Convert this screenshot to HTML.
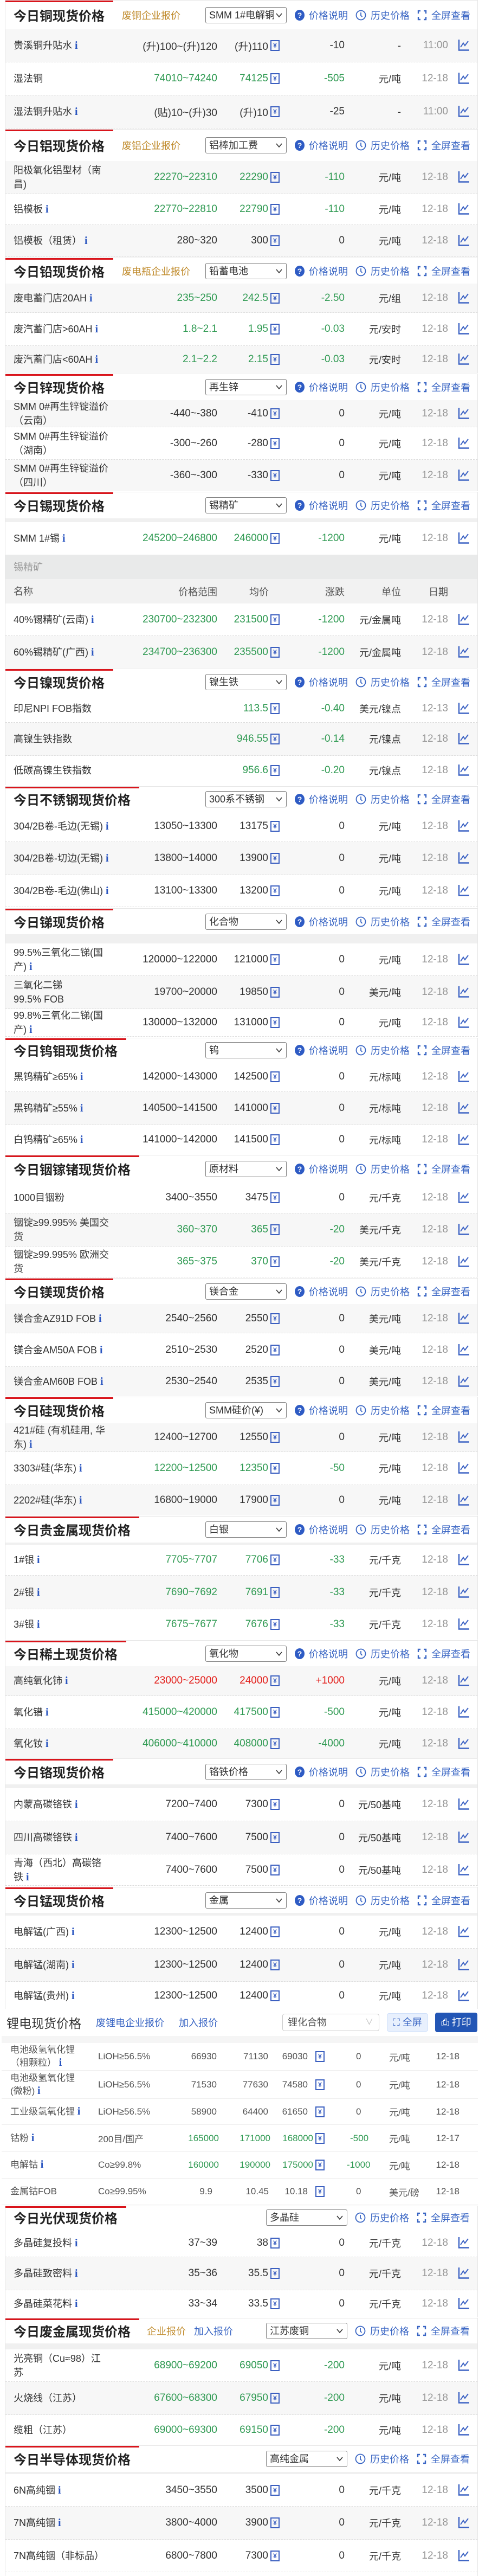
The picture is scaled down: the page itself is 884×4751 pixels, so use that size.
<!DOCTYPE html>
<html><head><meta charset="utf-8">
<style>
*{box-sizing:border-box;margin:0;padding:0}
body{width:884px;height:4751px;position:relative;background:#fff;font-family:"Liberation Sans","Noto Sans CJK SC",sans-serif;color:#333;overflow:hidden}
.s{position:absolute;left:9px;width:873px;border:1px solid #e6e6e6;border-bottom:none;background:#fff;overflow:hidden}
.bar{position:absolute;left:0;top:-1px;height:4px;background:#d9141b;z-index:3}
.h{position:absolute;left:0;right:0;top:0;background:#fff}
.h>*{position:absolute;top:50%;transform:translateY(-50%)}
.t{left:15px;font:bold 24px/30px "Noto Sans CJK SC",sans-serif;color:#222;white-space:nowrap}
.gl{font-size:18px;color:#c08b2c;white-space:nowrap}
.bl{font-size:18px;color:#3a66c4;white-space:nowrap}
.sel{left:369px;width:150px;height:30px;border:1px solid #808080;border-radius:3px;font-size:18px;line-height:28px;padding-left:6px;white-space:nowrap;overflow:hidden;color:#333;background:#fff}
.sel svg{position:absolute;right:7px;top:9px}
.lk{left:534px;display:flex;align-items:center;font-size:18px;color:#3a66c4;white-space:nowrap}
.q{display:inline-block;width:18px;height:20px;border-radius:50%;background:#2e5bc4;color:#fff;font:bold 14px/20px "Liberation Sans";text-align:center;font-style:normal;margin-right:8px}
.lk svg{margin:0 8px 0 14px}
.r{position:absolute;left:0;right:0;border-bottom:1px dashed #dcdcdc;background:#fff}
.g{background:#f7f7f7}
.r>span{position:absolute;top:0;bottom:0;display:flex;align-items:center;white-space:nowrap;font-size:19px;color:#333}
.r>span.n{left:15px;width:178px;font-size:18px;white-space:normal;line-height:26px}
.n p{margin:0}
.n i,.li i{font:bold 20px "Liberation Serif",serif;color:#2b56c0;font-style:normal}
.a{right:480px}
.v{right:365px}
.c{right:245px}
.u{right:141px;font-size:18px!important}
.d{right:54px;color:#999!important}
.k{position:absolute;left:835px;top:50%;margin-top:-12px;width:22px;height:22px}
.y{display:inline-block;width:17px;height:20px;border:2px solid #3b5fc0;color:#3b5fc0;font:bold 12px/16px "Liberation Sans";text-align:center;margin-left:4px}
.G{color:#2f9a52!important}
.R{color:#e3211d!important}
.band{position:absolute;left:0;right:0;background:#f0f0f0}
.li{position:absolute;left:0;right:0;border-bottom:1px solid #eee;background:#fff}
.li>span{position:absolute;top:0;bottom:0;display:flex;align-items:center;white-space:nowrap;font-size:17px;color:#555}
.li>span.n{left:16px;width:130px;white-space:normal;line-height:24px}
</style></head><body>
<svg width="0" height="0" style="position:absolute"><defs>
<symbol id="ch" viewBox="0 0 22 22"><path d="M2 1V20.5H21" fill="none" stroke="#3d63c4" stroke-width="2.4"/><path d="M5 15L10 7.5L13 12L19 4" fill="none" stroke="#3d63c4" stroke-width="2"/></symbol>
<symbol id="cv" viewBox="0 0 12 10"><path d="M1 2L6 8L11 2" fill="none" stroke="#333" stroke-width="1.6"/></symbol>
<symbol id="ck" viewBox="0 0 20 20"><circle cx="10" cy="10" r="8.5" fill="none" stroke="#3a66c4" stroke-width="1.8"/><path d="M10 5V10.5L12.5 13" fill="none" stroke="#3a66c4" stroke-width="1.8"/></symbol>
<symbol id="br" viewBox="0 0 18 20"><path d="M6 2H2V7M12 2H16V7M2 13V18H6M16 13V18H12" fill="none" stroke="#3a66c4" stroke-width="2.4"/></symbol>
</defs></svg>

<!-- 1 copper -->
<div class="s" style="top:0;height:237px"><div class="bar" style="width:199px"></div>
<div class="h" style="height:53px"><b class="t">今日铜现货价格</b><span class="gl" style="left:215px">废铜企业报价</span><div class="sel">SMM 1#电解铜<svg width="12" height="10"><use href="#cv"/></svg></div><div class="lk"><i class="q">?</i>价格说明<svg width="20" height="20"><use href="#ck"/></svg>历史价格<svg width="18" height="20"><use href="#br"/></svg>全屏查看</div></div>
<div class="r g" style="top:53px;height:61px"><span class="n"><p>贵溪铜升贴水 <i>i</i></p></span><span class="a">(升)100~(升)120</span><span class="v">(升)110<b class="y">¥</b></span><span class="c">-10</span><span class="u">-</span><span class="d">11:00</span><svg class="k"><use href="#ch"/></svg></div>
<div class="r" style="top:114px;height:61px"><span class="n"><p>湿法铜</p></span><span class="a G">74010~74240</span><span class="v G">74125<b class="y">¥</b></span><span class="c G">-505</span><span class="u">元/吨</span><span class="d">12-18</span><svg class="k"><use href="#ch"/></svg></div>
<div class="r g" style="top:175px;height:61px"><span class="n"><p>湿法铜升贴水 <i>i</i></p></span><span class="a">(贴)10~(升)30</span><span class="v">(升)10<b class="y">¥</b></span><span class="c">-25</span><span class="u">-</span><span class="d">11:00</span><svg class="k"><use href="#ch"/></svg></div>
</div>

<!-- 2 aluminium -->
<div class="s" style="top:238px;height:237px"><div class="bar" style="width:199px"></div>
<div class="h" style="height:58px"><b class="t">今日铝现货价格</b><span class="gl" style="left:215px">废铝企业报价</span><div class="sel">铝棒加工费<svg width="12" height="10"><use href="#cv"/></svg></div><div class="lk"><i class="q">?</i>价格说明<svg width="20" height="20"><use href="#ck"/></svg>历史价格<svg width="18" height="20"><use href="#br"/></svg>全屏查看</div></div>
<div class="r g" style="top:58px;height:61px"><span class="n"><p>阳极氧化铝型材（南昌)</p></span><span class="a G">22270~22310</span><span class="v G">22290<b class="y">¥</b></span><span class="c G">-110</span><span class="u">元/吨</span><span class="d">12-18</span><svg class="k"><use href="#ch"/></svg></div>
<div class="r" style="top:119px;height:57px"><span class="n"><p>铝模板 <i>i</i></p></span><span class="a G">22770~22810</span><span class="v G">22790<b class="y">¥</b></span><span class="c G">-110</span><span class="u">元/吨</span><span class="d">12-18</span><svg class="k"><use href="#ch"/></svg></div>
<div class="r g" style="top:176px;height:59px"><span class="n"><p>铝模板（租赁） <i>i</i></p></span><span class="a">280~320</span><span class="v">300<b class="y">¥</b></span><span class="c">0</span><span class="u">元/吨</span><span class="d">12-18</span><svg class="k"><use href="#ch"/></svg></div>
</div>

<!-- 3 lead -->
<div class="s" style="top:475px;height:213px"><div class="bar" style="width:199px"></div>
<div class="h" style="height:47px"><b class="t">今日铅现货价格</b><span class="gl" style="left:215px">废电瓶企业报价</span><div class="sel">铅蓄电池<svg width="12" height="10"><use href="#cv"/></svg></div><div class="lk"><i class="q">?</i>价格说明<svg width="20" height="20"><use href="#ck"/></svg>历史价格<svg width="18" height="20"><use href="#br"/></svg>全屏查看</div></div>
<div class="r g" style="top:47px;height:54px"><span class="n"><p>废电蓄门店20AH <i>i</i></p></span><span class="a G">235~250</span><span class="v G">242.5<b class="y">¥</b></span><span class="c G">-2.50</span><span class="u">元/组</span><span class="d">12-18</span><svg class="k"><use href="#ch"/></svg></div>
<div class="r" style="top:101px;height:61px"><span class="n"><p>废汽蓄门店&gt;60AH <i>i</i></p></span><span class="a G">1.8~2.1</span><span class="v G">1.95<b class="y">¥</b></span><span class="c G">-0.03</span><span class="u">元/安时</span><span class="d">12-18</span><svg class="k"><use href="#ch"/></svg></div>
<div class="r g" style="top:162px;height:51px"><span class="n"><p>废汽蓄门店&lt;60AH <i>i</i></p></span><span class="a G">2.1~2.2</span><span class="v G">2.15<b class="y">¥</b></span><span class="c G">-0.03</span><span class="u">元/安时</span><span class="d">12-18</span><svg class="k"><use href="#ch"/></svg></div>
</div>

<!-- 4 zinc -->
<div class="s" style="top:689px;height:217px"><div class="bar" style="width:199px"></div>
<div class="h" style="height:48px"><b class="t">今日锌现货价格</b><div class="sel">再生锌<svg width="12" height="10"><use href="#cv"/></svg></div><div class="lk"><i class="q">?</i>价格说明<svg width="20" height="20"><use href="#ck"/></svg>历史价格<svg width="18" height="20"><use href="#br"/></svg>全屏查看</div></div>
<div class="r g" style="top:48px;height:50px"><span class="n"><p>SMM 0#再生锌锭溢价（云南）</p></span><span class="a">-440~-380</span><span class="v">-410<b class="y">¥</b></span><span class="c">0</span><span class="u">元/吨</span><span class="d">12-18</span><svg class="k"><use href="#ch"/></svg></div>
<div class="r" style="top:98px;height:60px"><span class="n"><p>SMM 0#再生锌锭溢价（湖南）</p></span><span class="a">-300~-260</span><span class="v">-280<b class="y">¥</b></span><span class="c">0</span><span class="u">元/吨</span><span class="d">12-18</span><svg class="k"><use href="#ch"/></svg></div>
<div class="r g" style="top:158px;height:59px"><span class="n"><p>SMM 0#再生锌锭溢价（四川）</p></span><span class="a">-360~-300</span><span class="v">-330<b class="y">¥</b></span><span class="c">0</span><span class="u">元/吨</span><span class="d">12-18</span><svg class="k"><use href="#ch"/></svg></div>
</div>

<!-- 5 tin -->
<div class="s" style="top:907px;height:325px"><div class="bar" style="width:199px"></div>
<div class="h" style="height:48px"><b class="t">今日锡现货价格</b><div class="sel">锡精矿<svg width="12" height="10"><use href="#cv"/></svg></div><div class="lk"><i class="q">?</i>价格说明<svg width="20" height="20"><use href="#ck"/></svg>历史价格<svg width="18" height="20"><use href="#br"/></svg>全屏查看</div></div>
<div class="band" style="top:48px;height:7px"></div>
<div class="r" style="top:55px;height:60px;border-bottom:none"><span class="n"><p>SMM 1#锡 <i>i</i></p></span><span class="a G">245200~246800</span><span class="v G">246000<b class="y">¥</b></span><span class="c G">-1200</span><span class="u">元/吨</span><span class="d">12-18</span><svg class="k"><use href="#ch"/></svg></div>
<div class="r" style="top:115px;height:45px;background:#e9eaea;border:none"><span class="n" style="color:#999"><p>锡精矿</p></span></div>
<div class="r" style="top:160px;height:45px;background:#f2f2f2;border:none"><span class="n" style="color:#555"><p>名称</p></span><span class="a" style="color:#555;font-size:18px">价格范围</span><span class="v" style="right:385px;color:#555;font-size:18px">均价</span><span class="c" style="color:#555;font-size:18px">涨跌</span><span class="u" style="color:#555">单位</span><span class="d" style="color:#555!important;font-size:18px;right:54px">日期</span></div>
<div class="r" style="top:205px;height:60px"><span class="n"><p>40%锡精矿(云南) <i>i</i></p></span><span class="a G">230700~232300</span><span class="v G">231500<b class="y">¥</b></span><span class="c G">-1200</span><span class="u">元/金属吨</span><span class="d">12-18</span><svg class="k"><use href="#ch"/></svg></div>
<div class="r g" style="top:265px;height:60px"><span class="n"><p>60%锡精矿(广西) <i>i</i></p></span><span class="a G">234700~236300</span><span class="v G">235500<b class="y">¥</b></span><span class="c G">-1200</span><span class="u">元/金属吨</span><span class="d">12-18</span><svg class="k"><use href="#ch"/></svg></div>
</div>

<!-- 6 nickel -->
<div class="s" style="top:1233px;height:215px"><div class="bar" style="width:199px"></div>
<div class="h" style="height:47px"><b class="t">今日镍现货价格</b><div class="sel">镍生铁<svg width="12" height="10"><use href="#cv"/></svg></div><div class="lk"><i class="q">?</i>价格说明<svg width="20" height="20"><use href="#ck"/></svg>历史价格<svg width="18" height="20"><use href="#br"/></svg>全屏查看</div></div>
<div class="r" style="top:47px;height:52px"><span class="n"><p>印尼NPI FOB指数</p></span><span class="v G">113.5<b class="y">¥</b></span><span class="c G">-0.40</span><span class="u">美元/镍点</span><span class="d">12-13</span><svg class="k"><use href="#ch"/></svg></div>
<div class="r g" style="top:99px;height:61px"><span class="n"><p>高镍生铁指数</p></span><span class="v G">946.55<b class="y">¥</b></span><span class="c G">-0.14</span><span class="u">元/镍点</span><span class="d">12-18</span><svg class="k"><use href="#ch"/></svg></div>
<div class="r" style="top:160px;height:55px"><span class="n"><p>低碳高镍生铁指数</p></span><span class="v G">956.6<b class="y">¥</b></span><span class="c G">-0.20</span><span class="u">元/镍点</span><span class="d">12-18</span><svg class="k"><use href="#ch"/></svg></div>
</div>

<!-- 7 stainless -->
<div class="s" style="top:1450px;height:224px"><div class="bar" style="width:247px"></div>
<div class="h" style="height:45px"><b class="t">今日不锈钢现货价格</b><div class="sel">300系不锈钢<svg width="12" height="10"><use href="#cv"/></svg></div><div class="lk"><i class="q">?</i>价格说明<svg width="20" height="20"><use href="#ck"/></svg>历史价格<svg width="18" height="20"><use href="#br"/></svg>全屏查看</div></div>
<div class="r" style="top:45px;height:57px"><span class="n"><p>304/2B卷-毛边(无锡) <i>i</i></p></span><span class="a">13050~13300</span><span class="v">13175<b class="y">¥</b></span><span class="c">0</span><span class="u">元/吨</span><span class="d">12-18</span><svg class="k"><use href="#ch"/></svg></div>
<div class="r g" style="top:102px;height:61px"><span class="n"><p>304/2B卷-切边(无锡) <i>i</i></p></span><span class="a">13800~14000</span><span class="v">13900<b class="y">¥</b></span><span class="c">0</span><span class="u">元/吨</span><span class="d">12-18</span><svg class="k"><use href="#ch"/></svg></div>
<div class="r" style="top:163px;height:59px"><span class="n"><p>304/2B卷-毛边(佛山) <i>i</i></p></span><span class="a">13100~13300</span><span class="v">13200<b class="y">¥</b></span><span class="c">0</span><span class="u">元/吨</span><span class="d">12-18</span><svg class="k"><use href="#ch"/></svg></div>
</div>

<!-- 8 antimony -->
<div class="s" style="top:1675px;height:238px"><div class="bar" style="width:199px"></div>
<div class="h" style="height:47px"><b class="t">今日锑现货价格</b><div class="sel">化合物<svg width="12" height="10"><use href="#cv"/></svg></div><div class="lk"><i class="q">?</i>价格说明<svg width="20" height="20"><use href="#ck"/></svg>历史价格<svg width="18" height="20"><use href="#br"/></svg>全屏查看</div></div>
<div class="band" style="top:47px;height:17px"></div>
<div class="r" style="top:64px;height:60px"><span class="n"><p>99.5%三氧化二锑(国产) <i>i</i></p></span><span class="a">120000~122000</span><span class="v">121000<b class="y">¥</b></span><span class="c">0</span><span class="u">元/吨</span><span class="d">12-18</span><svg class="k"><use href="#ch"/></svg></div>
<div class="r g" style="top:124px;height:61px"><span class="n"><p style="width:140px">三氧化二锑99.5% FOB</p></span><span class="a">19700~20000</span><span class="v">19850<b class="y">¥</b></span><span class="c">0</span><span class="u">美元/吨</span><span class="d">12-18</span><svg class="k"><use href="#ch"/></svg></div>
<div class="r" style="top:185px;height:51px"><span class="n"><p>99.8%三氧化二锑(国产) <i>i</i></p></span><span class="a">130000~132000</span><span class="v">131000<b class="y">¥</b></span><span class="c">0</span><span class="u">元/吨</span><span class="d">12-18</span><svg class="k"><use href="#ch"/></svg></div>
</div>

<!-- 9 tungsten -->
<div class="s" style="top:1914px;height:215px"><div class="bar" style="width:223px"></div>
<div class="h" style="height:44px"><b class="t">今日钨钼现货价格</b><div class="sel">钨<svg width="12" height="10"><use href="#cv"/></svg></div><div class="lk"><i class="q">?</i>价格说明<svg width="20" height="20"><use href="#ck"/></svg>历史价格<svg width="18" height="20"><use href="#br"/></svg>全屏查看</div></div>
<div class="r" style="top:44px;height:55px"><span class="n"><p>黑钨精矿≥65% <i>i</i></p></span><span class="a">142000~143000</span><span class="v">142500<b class="y">¥</b></span><span class="c">0</span><span class="u">元/标吨</span><span class="d">12-18</span><svg class="k"><use href="#ch"/></svg></div>
<div class="r g" style="top:99px;height:61px"><span class="n"><p>黑钨精矿≥55% <i>i</i></p></span><span class="a">140500~141500</span><span class="v">141000<b class="y">¥</b></span><span class="c">0</span><span class="u">元/标吨</span><span class="d">12-18</span><svg class="k"><use href="#ch"/></svg></div>
<div class="r" style="top:160px;height:55px"><span class="n"><p>白钨精矿≥65% <i>i</i></p></span><span class="a">141000~142000</span><span class="v">141500<b class="y">¥</b></span><span class="c">0</span><span class="u">元/标吨</span><span class="d">12-18</span><svg class="k"><use href="#ch"/></svg></div>
</div>

<!-- 10 indium -->
<div class="s" style="top:2130px;height:226px"><div class="bar" style="width:247px"></div>
<div class="h" style="height:49px"><b class="t">今日铟镓锗现货价格</b><div class="sel">原材料<svg width="12" height="10"><use href="#cv"/></svg></div><div class="lk"><i class="q">?</i>价格说明<svg width="20" height="20"><use href="#ck"/></svg>历史价格<svg width="18" height="20"><use href="#br"/></svg>全屏查看</div></div>
<div class="r" style="top:49px;height:58px"><span class="n"><p>1000目铟粉</p></span><span class="a">3400~3550</span><span class="v">3475<b class="y">¥</b></span><span class="c">0</span><span class="u">元/千克</span><span class="d">12-18</span><svg class="k"><use href="#ch"/></svg></div>
<div class="r g" style="top:107px;height:61px"><span class="n"><p>铟锭≥99.995% 美国交货</p></span><span class="a G">360~370</span><span class="v G">365<b class="y">¥</b></span><span class="c G">-20</span><span class="u">美元/千克</span><span class="d">12-18</span><svg class="k"><use href="#ch"/></svg></div>
<div class="r" style="top:168px;height:57px"><span class="n"><p>铟锭≥99.995% 欧洲交货</p></span><span class="a G">365~375</span><span class="v G">370<b class="y">¥</b></span><span class="c G">-20</span><span class="u">美元/千克</span><span class="d">12-18</span><svg class="k"><use href="#ch"/></svg></div>
</div>

<!-- 11 magnesium -->
<div class="s" style="top:2357px;height:218px"><div class="bar" style="width:199px"></div>
<div class="h" style="height:47px"><b class="t">今日镁现货价格</b><div class="sel">镁合金<svg width="12" height="10"><use href="#cv"/></svg></div><div class="lk"><i class="q">?</i>价格说明<svg width="20" height="20"><use href="#ck"/></svg>历史价格<svg width="18" height="20"><use href="#br"/></svg>全屏查看</div></div>
<div class="r g" style="top:47px;height:54px"><span class="n"><p>镁合金AZ91D FOB <i>i</i></p></span><span class="a">2540~2560</span><span class="v">2550<b class="y">¥</b></span><span class="c">0</span><span class="u">美元/吨</span><span class="d">12-18</span><svg class="k"><use href="#ch"/></svg></div>
<div class="r" style="top:101px;height:62px"><span class="n"><p>镁合金AM50A FOB <i>i</i></p></span><span class="a">2510~2530</span><span class="v">2520<b class="y">¥</b></span><span class="c">0</span><span class="u">美元/吨</span><span class="d">12-18</span><svg class="k"><use href="#ch"/></svg></div>
<div class="r g" style="top:163px;height:55px"><span class="n"><p>镁合金AM60B FOB <i>i</i></p></span><span class="a">2530~2540</span><span class="v">2535<b class="y">¥</b></span><span class="c">0</span><span class="u">美元/吨</span><span class="d">12-18</span><svg class="k"><use href="#ch"/></svg></div>
</div>

<!-- 12 silicon -->
<div class="s" style="top:2576px;height:219px"><div class="bar" style="width:199px"></div>
<div class="h" style="height:48px"><b class="t">今日硅现货价格</b><div class="sel">SMM硅价(¥)<svg width="12" height="10"><use href="#cv"/></svg></div><div class="lk"><i class="q">?</i>价格说明<svg width="20" height="20"><use href="#ck"/></svg>历史价格<svg width="18" height="20"><use href="#br"/></svg>全屏查看</div></div>
<div class="r g" style="top:48px;height:53px"><span class="n"><p>421#硅 (有机硅用, 华东) <i>i</i></p></span><span class="a">12400~12700</span><span class="v">12550<b class="y">¥</b></span><span class="c">0</span><span class="u">元/吨</span><span class="d">12-18</span><svg class="k"><use href="#ch"/></svg></div>
<div class="r" style="top:101px;height:61px"><span class="n"><p>3303#硅(华东) <i>i</i></p></span><span class="a G">12200~12500</span><span class="v G">12350<b class="y">¥</b></span><span class="c G">-50</span><span class="u">元/吨</span><span class="d">12-18</span><svg class="k"><use href="#ch"/></svg></div>
<div class="r g" style="top:162px;height:57px"><span class="n"><p>2202#硅(华东) <i>i</i></p></span><span class="a">16800~19000</span><span class="v">17900<b class="y">¥</b></span><span class="c">0</span><span class="u">元/吨</span><span class="d">12-18</span><svg class="k"><use href="#ch"/></svg></div>
</div>

<!-- 13 precious -->
<div class="s" style="top:2796px;height:228px"><div class="bar" style="width:247px"></div>
<div class="h" style="height:48px"><b class="t">今日贵金属现货价格</b><div class="sel">白银<svg width="12" height="10"><use href="#cv"/></svg></div><div class="lk"><i class="q">?</i>价格说明<svg width="20" height="20"><use href="#ck"/></svg>历史价格<svg width="18" height="20"><use href="#br"/></svg>全屏查看</div></div>
<div class="band" style="top:48px;height:4px"></div>
<div class="r" style="top:52px;height:57px"><span class="n"><p>1#银 <i>i</i></p></span><span class="a G">7705~7707</span><span class="v G">7706<b class="y">¥</b></span><span class="c G">-33</span><span class="u">元/千克</span><span class="d">12-18</span><svg class="k"><use href="#ch"/></svg></div>
<div class="r g" style="top:109px;height:62px"><span class="n"><p>2#银 <i>i</i></p></span><span class="a G">7690~7692</span><span class="v G">7691<b class="y">¥</b></span><span class="c G">-33</span><span class="u">元/千克</span><span class="d">12-18</span><svg class="k"><use href="#ch"/></svg></div>
<div class="r" style="top:171px;height:57px"><span class="n"><p>3#银 <i>i</i></p></span><span class="a G">7675~7677</span><span class="v G">7676<b class="y">¥</b></span><span class="c G">-33</span><span class="u">元/千克</span><span class="d">12-18</span><svg class="k"><use href="#ch"/></svg></div>
</div>

<!-- 14 rare earth -->
<div class="s" style="top:3025px;height:217px"><div class="bar" style="width:223px"></div>
<div class="h" style="height:47px"><b class="t">今日稀土现货价格</b><div class="sel">氧化物<svg width="12" height="10"><use href="#cv"/></svg></div><div class="lk"><i class="q">?</i>价格说明<svg width="20" height="20"><use href="#ck"/></svg>历史价格<svg width="18" height="20"><use href="#br"/></svg>全屏查看</div></div>
<div class="r g" style="top:47px;height:55px"><span class="n"><p>高纯氧化铈 <i>i</i></p></span><span class="a R">23000~25000</span><span class="v R">24000<b class="y">¥</b></span><span class="c R">+1000</span><span class="u">元/吨</span><span class="d">12-18</span><svg class="k"><use href="#ch"/></svg></div>
<div class="r" style="top:102px;height:61px"><span class="n"><p>氧化镨 <i>i</i></p></span><span class="a G">415000~420000</span><span class="v G">417500<b class="y">¥</b></span><span class="c G">-500</span><span class="u">元/吨</span><span class="d">12-18</span><svg class="k"><use href="#ch"/></svg></div>
<div class="r g" style="top:163px;height:54px"><span class="n"><p>氧化钕 <i>i</i></p></span><span class="a G">406000~410000</span><span class="v G">408000<b class="y">¥</b></span><span class="c G">-4000</span><span class="u">元/吨</span><span class="d">12-18</span><svg class="k"><use href="#ch"/></svg></div>
</div>

<!-- 15 chromium -->
<div class="s" style="top:3243px;height:236px"><div class="bar" style="width:199px"></div>
<div class="h" style="height:47px"><b class="t">今日铬现货价格</b><div class="sel">铬铁价格<svg width="12" height="10"><use href="#cv"/></svg></div><div class="lk"><i class="q">?</i>价格说明<svg width="20" height="20"><use href="#ck"/></svg>历史价格<svg width="18" height="20"><use href="#br"/></svg>全屏查看</div></div>
<div class="band" style="top:47px;height:7px"></div>
<div class="r" style="top:54px;height:61px"><span class="n"><p>内蒙高碳铬铁 <i>i</i></p></span><span class="a">7200~7400</span><span class="v">7300<b class="y">¥</b></span><span class="c">0</span><span class="u">元/50基吨</span><span class="d">12-18</span><svg class="k"><use href="#ch"/></svg></div>
<div class="r g" style="top:115px;height:61px"><span class="n"><p>四川高碳铬铁 <i>i</i></p></span><span class="a">7400~7600</span><span class="v">7500<b class="y">¥</b></span><span class="c">0</span><span class="u">元/50基吨</span><span class="d">12-18</span><svg class="k"><use href="#ch"/></svg></div>
<div class="r" style="top:176px;height:58px"><span class="n"><p>青海（西北）高碳铬铁 <i>i</i></p></span><span class="a">7400~7600</span><span class="v">7500<b class="y">¥</b></span><span class="c">0</span><span class="u">元/50基吨</span><span class="d">12-18</span><svg class="k"><use href="#ch"/></svg></div>
</div>

<!-- 16 manganese -->
<div class="s" style="top:3480px;height:225px"><div class="bar" style="width:199px"></div>
<div class="h" style="height:47px"><b class="t">今日锰现货价格</b><div class="sel">金属<svg width="12" height="10"><use href="#cv"/></svg></div><div class="lk"><i class="q">?</i>价格说明<svg width="20" height="20"><use href="#ck"/></svg>历史价格<svg width="18" height="20"><use href="#br"/></svg>全屏查看</div></div>
<div class="band" style="top:47px;height:5px"></div>
<div class="r" style="top:52px;height:61px"><span class="n"><p>电解锰(广西) <i>i</i></p></span><span class="a">12300~12500</span><span class="v">12400<b class="y">¥</b></span><span class="c">0</span><span class="u">元/吨</span><span class="d">12-18</span><svg class="k"><use href="#ch"/></svg></div>
<div class="r g" style="top:113px;height:61px"><span class="n"><p>电解锰(湖南) <i>i</i></p></span><span class="a">12300~12500</span><span class="v">12400<b class="y">¥</b></span><span class="c">0</span><span class="u">元/吨</span><span class="d">12-18</span><svg class="k"><use href="#ch"/></svg></div>
<div class="r" style="top:174px;height:51px;border:none"><span class="n"><p>电解锰(贵州) <i>i</i></p></span><span class="a">12300~12500</span><span class="v">12400<b class="y">¥</b></span><span class="c">0</span><span class="u">元/吨</span><span class="d">12-18</span><svg class="k"><use href="#ch"/></svg></div>
</div>

<!-- 17 lithium -->
<div class="s" style="top:3705px;height:362px;left:3px;width:879px;border:none">
<div class="h" style="height:50px"><span style="left:9px;font-size:23px;color:#333;white-space:nowrap">锂电现货价格</span><span class="bl" style="left:174px">废锂电企业报价</span><span class="bl" style="left:327px">加入报价</span>
<div style="left:518px;width:179px;height:32px;border:1px solid #ccc;border-radius:4px;font-size:18px;line-height:30px;padding-left:9px;color:#555">锂化合物<span style="position:absolute;right:10px;color:#bbb;font-size:15px">∨</span></div>
<div style="left:711px;width:76px;height:34px;border:1px solid #cfe0fa;background:#e8f0fd;border-radius:4px;color:#3a66c4;font-size:18px;line-height:32px;text-align:center">⛶ 全屏</div>
<div style="left:800px;width:78px;height:36px;background:#2356b5;border-radius:4px;color:#fff;font-size:18px;line-height:36px;text-align:center">⎙ 打印</div></div>
<div class="band" style="top:50px;height:13px;background:#f5f5f5"></div>
<div class="li" style="top:63px;height:51px"><span class="n"><p>电池级氢氧化锂（粗颗粒） <i>i</i></p></span><span style="left:178px">LiOH≥56.5%</span><span style="right:482px">66930</span><span style="right:387px">71130</span><span style="right:283px">69030<b class="y" style="margin-left:14px">¥</b></span><span style="left:654px">0</span><span style="left:715px">元/吨</span><span style="right:34px">12-18</span></div>
<div class="li" style="top:114px;height:52px"><span class="n"><p>电池级氢氧化锂(微粉) <i>i</i></p></span><span style="left:178px">LiOH≥56.5%</span><span style="right:482px">71530</span><span style="right:387px">77630</span><span style="right:283px">74580<b class="y" style="margin-left:14px">¥</b></span><span style="left:654px">0</span><span style="left:715px">元/吨</span><span style="right:34px">12-18</span></div>
<div class="li" style="top:166px;height:48px"><span class="n"><p>工业级氢氧化锂 <i>i</i></p></span><span style="left:178px">LiOH≥56.5%</span><span style="right:482px">58900</span><span style="right:387px">64400</span><span style="right:283px">61650<b class="y" style="margin-left:14px">¥</b></span><span style="left:654px">0</span><span style="left:715px">元/吨</span><span style="right:34px">12-18</span></div>
<div class="li" style="top:214px;height:50px"><span class="n"><p>钴粉 <i>i</i></p></span><span style="left:178px">200目/国产</span><span class="G" style="right:478px">165000</span><span class="G" style="right:383px">171000</span><span class="G" style="right:283px">168000<b class="y" style="margin-left:4px">¥</b></span><span class="G" style="left:643px">-500</span><span style="left:715px">元/吨</span><span style="right:34px">12-17</span></div>
<div class="li" style="top:264px;height:49px"><span class="n"><p>电解钴 <i>i</i></p></span><span style="left:178px">Co≥99.8%</span><span class="G" style="right:478px">160000</span><span class="G" style="right:383px">190000</span><span class="G" style="right:283px">175000<b class="y" style="margin-left:4px">¥</b></span><span class="G" style="left:637px">-1000</span><span style="left:715px">元/吨</span><span style="right:34px">12-18</span></div>
<div class="li" style="top:313px;height:49px"><span class="n"><p>金属钴FOB</p></span><span style="left:178px">Co≥99.95%</span><span style="right:490px">9.9</span><span style="right:386px">10.45</span><span style="right:283px">10.18<b class="y" style="margin-left:14px">¥</b></span><span style="left:654px">0</span><span style="left:715px">美元/磅</span><span style="right:34px">12-18</span></div>
</div>

<!-- 18 PV -->
<div class="s" style="top:4068px;height:206px"><div class="bar" style="width:223px"></div>
<div class="h" style="height:42px"><b class="t">今日光伏现货价格</b><div class="sel" style="left:481px">多晶硅<svg width="12" height="10"><use href="#cv"/></svg></div><div class="lk" style="left:631px">
<svg width="20" height="20"><use href="#ck"/></svg>历史价格<svg width="18" height="20"><use href="#br"/></svg>全屏查看</div></div>
<div class="r" style="top:42px;height:52px"><span class="n"><p>多晶硅复投料 <i>i</i></p></span><span class="a">37~39</span><span class="v">38<b class="y">¥</b></span><span class="c">0</span><span class="u">元/千克</span><span class="d">12-18</span><svg class="k"><use href="#ch"/></svg></div>
<div class="r g" style="top:94px;height:61px"><span class="n"><p>多晶硅致密料 <i>i</i></p></span><span class="a">35~36</span><span class="v">35.5<b class="y">¥</b></span><span class="c">0</span><span class="u">元/千克</span><span class="d">12-18</span><svg class="k"><use href="#ch"/></svg></div>
<div class="r" style="top:155px;height:51px"><span class="n"><p>多晶硅菜花料 <i>i</i></p></span><span class="a">33~34</span><span class="v">33.5<b class="y">¥</b></span><span class="c">0</span><span class="u">元/千克</span><span class="d">12-18</span><svg class="k"><use href="#ch"/></svg></div>
</div>

<!-- 19 scrap -->
<div class="s" style="top:4275px;height:234px"><div class="bar" style="width:247px"></div>
<div class="h" style="height:46px"><b class="t">今日废金属现货价格</b><span class="gl" style="left:261px">企业报价</span><span class="bl" style="left:348px">加入报价</span><div class="sel" style="left:481px">江苏废铜<svg width="12" height="10"><use href="#cv"/></svg></div><div class="lk" style="left:631px">
<svg width="20" height="20"><use href="#ck"/></svg>历史价格<svg width="18" height="20"><use href="#br"/></svg>全屏查看</div></div>
<div class="band" style="top:46px;height:11px"></div>
<div class="r" style="top:57px;height:60px"><span class="n"><p>光亮铜（Cu≈98）江苏</p></span><span class="a G">68900~69200</span><span class="v G">69050<b class="y">¥</b></span><span class="c G">-200</span><span class="u">元/吨</span><span class="d">12-18</span><svg class="k"><use href="#ch"/></svg></div>
<div class="r g" style="top:117px;height:61px"><span class="n"><p>火烧线（江苏）</p></span><span class="a G">67600~68300</span><span class="v G">67950<b class="y">¥</b></span><span class="c G">-200</span><span class="u">元/吨</span><span class="d">12-18</span><svg class="k"><use href="#ch"/></svg></div>
<div class="r" style="top:178px;height:56px"><span class="n"><p>缆粗（江苏）</p></span><span class="a G">69000~69300</span><span class="v G">69150<b class="y">¥</b></span><span class="c G">-200</span><span class="u">元/吨</span><span class="d">12-18</span><svg class="k"><use href="#ch"/></svg></div>
</div>

<!-- 20 semiconductor -->
<div class="s" style="top:4510px;height:241px"><div class="bar" style="width:247px"></div>
<div class="h" style="height:48px"><b class="t">今日半导体现货价格</b><div class="sel" style="left:481px">高纯金属<svg width="12" height="10"><use href="#cv"/></svg></div><div class="lk" style="left:631px">
<svg width="20" height="20"><use href="#ck"/></svg>历史价格<svg width="18" height="20"><use href="#br"/></svg>全屏查看</div></div>
<div class="band" style="top:48px;height:4px"></div>
<div class="r" style="top:52px;height:60px"><span class="n"><p>6N高纯铟 <i>i</i></p></span><span class="a">3450~3550</span><span class="v">3500<b class="y">¥</b></span><span class="c">0</span><span class="u">元/千克</span><span class="d">12-18</span><svg class="k"><use href="#ch"/></svg></div>
<div class="r g" style="top:112px;height:61px"><span class="n"><p>7N高纯铟 <i>i</i></p></span><span class="a">3800~4000</span><span class="v">3900<b class="y">¥</b></span><span class="c">0</span><span class="u">元/千克</span><span class="d">12-18</span><svg class="k"><use href="#ch"/></svg></div>
<div class="r" style="top:173px;height:60px"><span class="n"><p>7N高纯铟（非标品）</p></span><span class="a">6800~7800</span><span class="v">7300<b class="y">¥</b></span><span class="c">0</span><span class="u">元/千克</span><span class="d">12-18</span><svg class="k"><use href="#ch"/></svg></div>
</div>
</body></html>
